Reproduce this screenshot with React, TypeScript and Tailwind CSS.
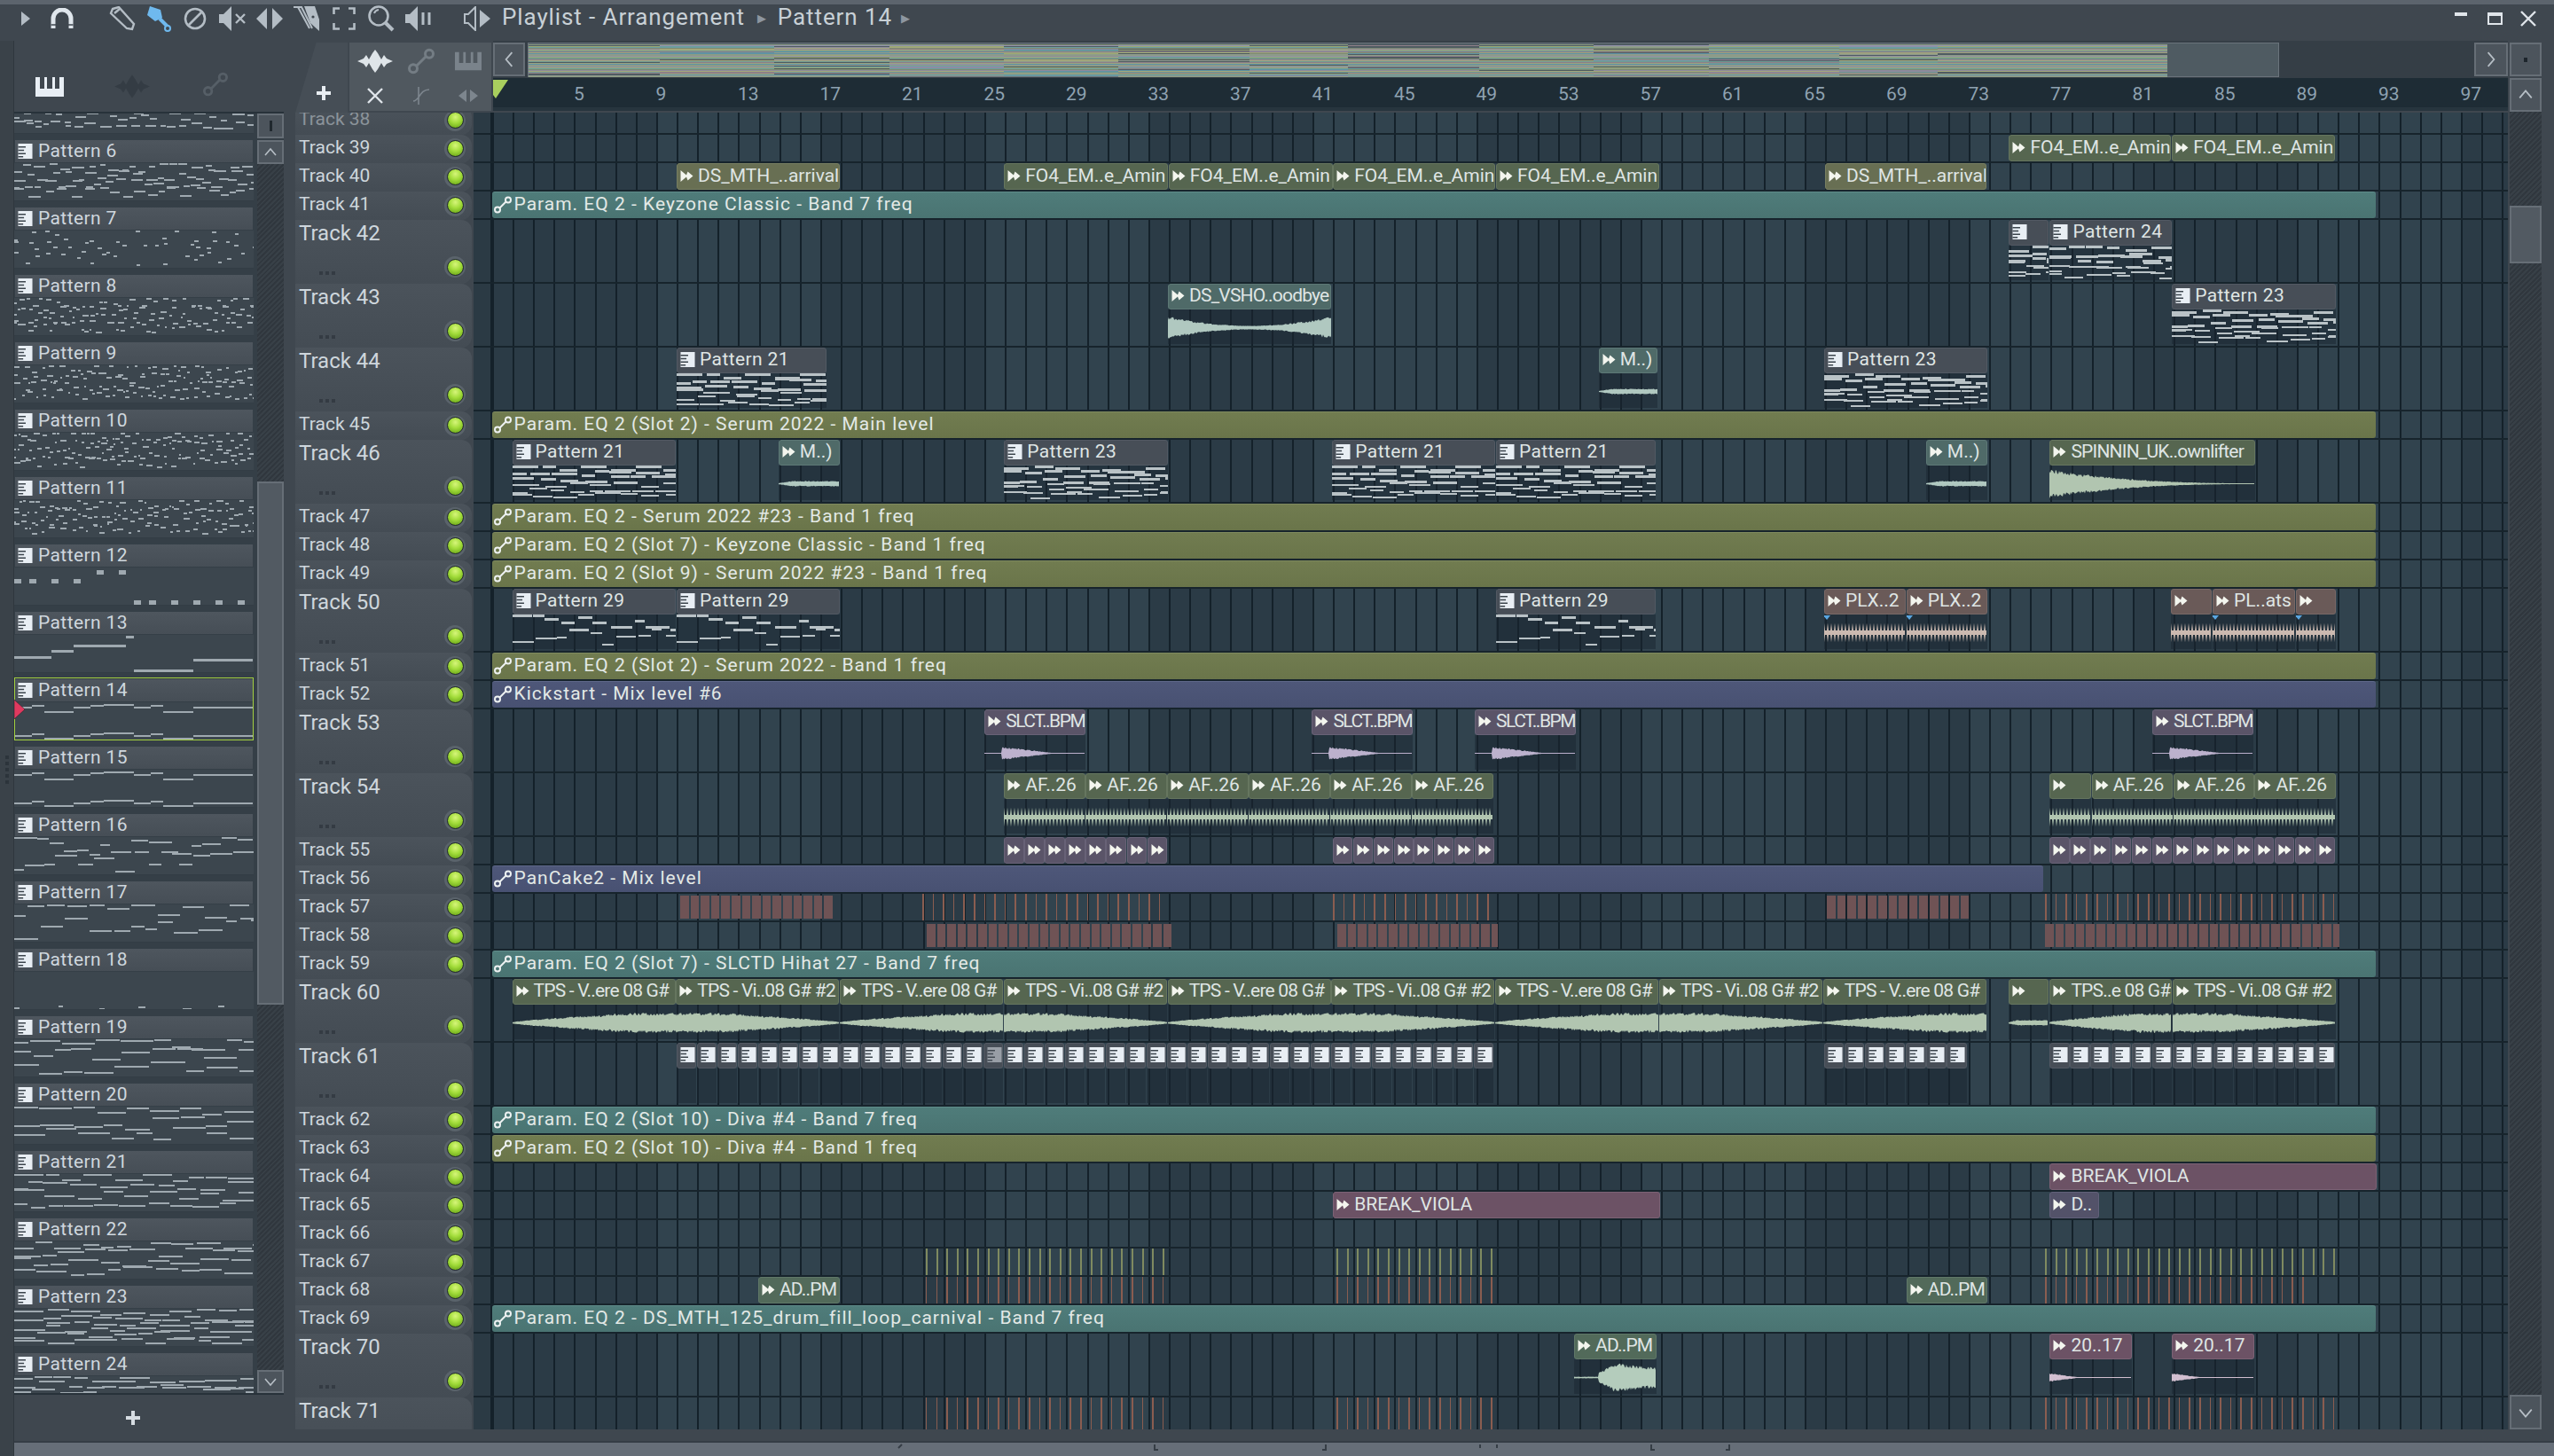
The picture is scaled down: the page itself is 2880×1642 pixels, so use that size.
import type { ReactNode } from "react";

const S = 1.8367;
const GRID_X = 555.5;
const NOTE = "#9fa9b0";

function rng(seed: number) {
  let s = seed * 7919 + 17;
  return () => {
    s = (s * 16807) % 2147483647;
    return (s % 10000) / 10000;
  };
}

type Note = [number, number, number, number?];

const melody14: Note[] = [
  [0, 5, 20], [20, 3, 14], [34, 10, 33], [67, 5, 19], [86, 3, 15], [101, 2, 34],
  [135, 5, 19], [154, 3, 14], [168, 10, 34], [202, 5, 67],
  [0, 37, 20], [20, 35, 14], [34, 40, 33], [67, 37, 19], [86, 35, 15], [101, 34, 34],
  [135, 37, 19], [154, 35, 14], [168, 40, 34], [202, 37, 67],
];

const fixedNotes: Record<number, Note[]> = {
  12: [
    [0, 13, 8, 5], [17, 13, 8, 5], [42, 13, 8, 5], [67, 13, 8, 5], [93, 3, 8, 5], [118, 3, 8, 5],
    [135, 37, 8, 5], [152, 37, 8, 5], [177, 37, 8, 5], [202, 37, 8, 5], [227, 37, 8, 5], [252, 37, 8, 5],
  ],
  13: [[0, 24, 42, 3], [42, 17, 25, 3], [67, 11, 59, 3], [126, 1, 9, 3], [135, 39, 67, 3], [202, 27, 67, 3]],
  14: melody14,
  15: melody14,
};

// walks a few voices over the clip, long = held notes, short = dotted notes
function genNotes(seed: number, w: number, h: number, voices: number, minW: number, maxW: number, gap: number, noteH = 2): Note[] {
  const r = rng(seed);
  const out: Note[] = [];
  for (let v = 0; v < voices; v++) {
    const base = ((v + 0.4) / voices) * (h - 5);
    let x = 0;
    let y = base;
    while (x < w) {
      const len = minW + r() * (maxW - minW);
      y = base + (r() - 0.5) * (h / voices) * 1.1;
      out.push([x, Math.max(0, Math.min(h - 2, Math.round(y))), len, noteH]);
      x += len + gap * r();
    }
  }
  return out;
}

function patternNotes(n: number): Note[] {
  if (fixedNotes[n]) return fixedNotes[n];
  if (n <= 6) return genNotes(n, 270, 43, 4, 6, 14, 6);
  if (n === 7) return genNotes(7, 270, 43, 3, 4, 5, 26);
  if (n <= 11) return genNotes(n, 270, 43, 4, 2, 7, 7, 1.5);
  if (n === 16) return genNotes(16, 270, 43, 2, 10, 26, 1);
  if (n === 17) return genNotes(17, 270, 43, 2, 12, 30, 4);
  if (n === 18) return [[0, 40, 6, 2], [50, 38, 5, 2], [96, 41, 6, 2], [140, 39, 8, 2], [190, 41, 10, 2], [230, 38, 7, 2]];
  if (n <= 20) return genNotes(n, 270, 43, 3, 16, 40, 3);
  if (n <= 22) return genNotes(n, 270, 43, 4, 14, 34, 5);
  return genNotes(n, 270, 43, 6, 14, 36, 6);
}

function Notes({ notes, w, h, light }: { notes: Note[]; w: number; h: number; light?: boolean }) {
  return (
    <svg width={w} height={h} viewBox={`0 0 ${w} ${h}`} className="block" shapeRendering="crispEdges">
      {notes.map((n, i) => (
        <rect key={i} x={n[0]} y={n[1]} width={n[2]} height={n[3] ?? 2} fill={light ? "#b9c2c6" : NOTE} />
      ))}
    </svg>
  );
}

/* ---------- small glyphs ---------- */

function PatIcon({ dim }: { dim?: boolean }) {
  return (
    <svg width="17" height="17" viewBox="0 0 17 18" className={dim ? "shrink-0 opacity-50" : "shrink-0"}>
      <rect width="17" height="18" fill="#e8eef4" />
      <path d="M0 4h9M0 8h7M0 12h9M0 15.5h6" stroke="#3b444c" strokeWidth="1.6" />
    </svg>
  );
}

function AudioIcon({ dim }: { dim?: boolean }) {
  return (
    <svg width="15" height="13" viewBox="0 0 15 13" className={dim ? "shrink-0 opacity-50" : "shrink-0"}>
      <path d="M0.5 0 L7 5.4 L8.5 1.5 L14.5 6.5 L8.5 11.5 L7 7.6 L0.5 13 Z" fill="#f3f5ee" />
    </svg>
  );
}

function AutoIcon({ color = "#eef2f2", size = 20 }: { color?: string; size?: number }) {
  return (
    <svg width={size} height={size} viewBox="0 0 20 20" className="shrink-0" fill="none" stroke={color} strokeWidth="2">
      <circle cx="4" cy="15.5" r="3" />
      <circle cx="16" cy="4.5" r="3" />
      <path d="M6.5 13.5 L13.5 6.5" />
    </svg>
  );
}

function WaveIcon({ color = "#dfe5e9", w = 40, h = 26 }: { color?: string; w?: number; h?: number }) {
  return (
    <svg width={w} height={h} viewBox="0 0 40 26">
      <path
        fill={color}
        d="M0 13 L7 10 L10 6 L13 11 L17 4 L20 0 L23 4 L27 11 L30 6 L33 10 L40 13 L33 16 L30 20 L27 15 L23 22 L20 26 L17 22 L13 15 L10 20 L7 16 Z"
      />
    </svg>
  );
}

function PianoIcon({ color = "#e8eef4", w = 32, h = 22 }: { color?: string; w?: number; h?: number }) {
  return (
    <svg width={w} height={h} viewBox="0 0 32 22">
      <path fill={color} d="M0 0 H5 V13 H10 V0 H13 V13 H19 V0 H22 V13 H27 V0 H32 V22 H0 Z" />
    </svg>
  );
}

function Chevron({ dir, size = 16 }: { dir: "up" | "down" | "left" | "right"; size?: number }) {
  const d = {
    up: "M2 11 L8 4 L14 11",
    down: "M2 5 L8 12 L14 5",
    left: "M11 1 L5 8 L11 15",
    right: "M5 1 L11 8 L5 15",
  }[dir];
  return (
    <svg width={size} height={size} viewBox="0 0 16 16" fill="none" stroke="#b7bfc6" strokeWidth="1.6">
      <path d={d} />
    </svg>
  );
}

function ScrollBtn({ children, className }: { children?: ReactNode; className: string }) {
  return (
    <div className={`flex shrink-0 items-center justify-center border-2 border-[#666e76] bg-[#4c545c] ${className}`}>
      {children}
    </div>
  );
}

/* ---------- toolbar ---------- */

const ic = "#b4bdc5";

function Toolbar() {
  return (
    <div className="flex h-[41px] shrink-0 items-center pb-[9px] text-[#c8d0d6]">
      <svg width="10" height="16" viewBox="0 0 10 16" className="ml-[24px]">
        <path d="M0 0 L10 8 L0 16 Z" fill={ic} />
      </svg>
      <svg width="26" height="24" viewBox="0 0 26 24" fill="none" className="ml-[23px]">
        <path d="M3 23 V12 A10 10 0 0 1 23 12 V23" stroke="#dfe6ec" strokeWidth="5" />
        <path d="M0.5 19 H6 M20 19 H25.5" stroke="#3f474f" strokeWidth="1.5" />
      </svg>
      <svg width="30" height="28" viewBox="0 0 30 28" fill="none" stroke={ic} strokeWidth="2.4" className="ml-[40px]">
        <path d="M4 3 L11 1 L28 20 L26 26 L20 25 L2 8 Z" />
        <path d="M6 8 L12 3" />
      </svg>
      <svg width="30" height="29" viewBox="0 0 30 29" className="ml-[10px]">
        <path d="M6 0 L18 4 L20 13 L12 17 L3 10 Z" fill="#6fb9ee" />
        <path d="M17 14 L27 24" stroke="#6fb9ee" strokeWidth="4" />
        <circle cx="26" cy="25" r="3" fill="#3f474f" stroke="#6fb9ee" strokeWidth="2" />
      </svg>
      <svg width="26" height="26" viewBox="0 0 26 26" fill="none" stroke={ic} strokeWidth="2.6" className="ml-[14px]">
        <circle cx="13" cy="13" r="11" />
        <path d="M6 20 L20 6" />
      </svg>
      <svg width="31" height="28" viewBox="0 0 31 28" className="ml-[14px]">
        <path d="M0 9 H5 L14 0 V28 L5 19 H0 Z" fill={ic} />
        <path d="M19 9 L29 19 M29 9 L19 19" stroke={ic} strokeWidth="2.4" />
      </svg>
      <svg width="30" height="26" viewBox="0 0 30 26" className="ml-[11px]">
        <path d="M0 13 L12 1 V25 Z M30 13 L18 1 V25 Z" fill={ic} />
        <path d="M15 4 V22" stroke="#3f474f" strokeWidth="1" />
      </svg>
      <svg width="30" height="30" viewBox="0 0 30 30" className="ml-[12px]">
        <path d="M0 2 L9 2 L21 26 M5 2 L18 26" stroke={ic} strokeWidth="2" fill="none" />
        <path d="M12 1 H24 L29 16 V29 L19 20 Z" fill={ic} />
        <circle cx="22" cy="13" r="1.6" fill="#3f474f" />
      </svg>
      <svg width="26" height="26" viewBox="0 0 26 26" fill="none" stroke={ic} strokeWidth="2.6" className="ml-[14px]">
        <path d="M1.5 8 V1.5 H8 M18 1.5 H24.5 V8 M24.5 18 V24.5 H18 M8 24.5 H1.5 V18" />
      </svg>
      <svg width="30" height="30" viewBox="0 0 30 30" fill="none" stroke={ic} className="ml-[14px]">
        <circle cx="12" cy="12" r="10.5" strokeWidth="2.6" />
        <path d="M7 9 A6 6 0 0 1 12 5" strokeWidth="2" />
        <path d="M20 20 L28 28" strokeWidth="4" />
      </svg>
      <svg width="30" height="28" viewBox="0 0 30 28" className="ml-[12px]">
        <path d="M0 9 H5 L14 0 V28 L5 19 H0 Z" fill={ic} />
        <path d="M20 7 V21 M27 7 V21" stroke={ic} strokeWidth="3" />
      </svg>
      <svg width="30" height="28" viewBox="0 0 30 28" className="ml-[36px]">
        <path d="M1 9 H5 L13 1 V27 L5 19 H1 Z" fill="none" stroke={ic} strokeWidth="2" />
        <path d="M18 4 L30 14 L18 24 Z" fill={ic} />
      </svg>
      <span className="ml-[13px] pb-[3px] text-[26px] tracking-[0.9px]">Playlist - Arrangement</span>
      <span className="ml-[14px] text-[13px] text-[#8d96a0]">▶</span>
      <span className="ml-[13px] pb-[3px] text-[26px] tracking-[0.9px]">Pattern 14</span>
      <span className="ml-[10px] text-[13px] text-[#8d96a0]">▶</span>
      <div className="ml-auto mr-[20px] flex items-center">
        <div className="mb-[10px] h-[4px] w-[14px] bg-[#e0e5ea]" />
        <div className="ml-[23px] h-[14px] w-[17px] border-2 border-t-4 border-[#e0e5ea]" />
        <svg width="18" height="18" viewBox="0 0 18 18" stroke="#e0e5ea" strokeWidth="2.4" className="ml-[20px]">
          <path d="M1 1 L17 17 M17 1 L1 17" />
        </svg>
      </div>
    </div>
  );
}

/* ---------- picker panel ---------- */

const patternNums = Array.from({ length: 20 }, (_, i) => i + 5);

function PatternItem({ n }: { n: number }) {
  return (
    <div className="relative h-[76px] shrink-0">
      <div className="ml-px flex h-[25px] w-[268px] items-center gap-[6px] bg-gradient-to-b from-[#4e565e] to-[#464e56] pl-[3px] text-[21px] leading-none tracking-[0.4px] text-[#cfd7de]">
        <PatIcon />
        <span>Pattern {n}</span>
      </div>
      <div className="mt-px h-[43px] w-[270px] overflow-hidden border-b border-[#333d45] bg-[#3c464e]">
        <Notes notes={patternNotes(n)} w={270} h={43} />
      </div>
      {n === 14 && (
        <>
          <div className="absolute left-0 top-[-2px] h-[71px] w-[270px] border border-[#a4d040]" />
          <svg width="12" height="22" viewBox="0 0 12 22" className="absolute left-0 top-[23px]">
            <path d="M0 0 L12 11 L0 22 Z" fill="#e0395f" stroke="#22282e" strokeWidth="0.6" />
          </svg>
        </>
      )}
    </div>
  );
}

function PickerPanel() {
  return (
    <div className="flex w-[304px] shrink-0 flex-col">
      <div className="flex h-[80px] shrink-0 items-end pb-[17px]">
        <div className="ml-[24px]">
          <PianoIcon w={32} h={22} />
        </div>
        <div className="ml-[57px] mb-[-2px] opacity-30">
          <WaveIcon w={40} h={27} color="#1d252c" />
        </div>
        <div className="ml-[60px] opacity-40">
          <AutoIcon color="#7a838b" size={28} />
        </div>
      </div>
      <div className="flex h-[1447px] shrink-0 border-t-2 border-b-2 border-[#28323a] bg-[#353f47]">
        <div className="h-full w-[270px] shrink-0 overflow-hidden">
          <div className="mt-[-46px] flex flex-col">
            {patternNums.map((n) => (
              <PatternItem key={n} n={n} />
            ))}
          </div>
        </div>
        <div className="ml-[4px] flex w-[30px] flex-col">
          <ScrollBtn className="h-[28px]">
            <div className="h-[12px] w-[3px] bg-[#20282e]" />
          </ScrollBtn>
          <ScrollBtn className="mt-[2px] h-[27px]">
            <Chevron dir="up" />
          </ScrollBtn>
          <div className="h-[358px] bg-[repeating-linear-gradient(135deg,#30373e_0,#30373e_2px,#384047_2px,#384047_4px)]" />
          <div className="h-[590px] border-2 border-[#666e76] bg-[#525a62]" />
          <div className="flex-1 bg-[repeating-linear-gradient(135deg,#30373e_0,#30373e_2px,#384047_2px,#384047_4px)]" />
          <ScrollBtn className="h-[26px]">
            <Chevron dir="down" />
          </ScrollBtn>
        </div>
      </div>
      <div className="flex flex-1 items-center justify-center pr-[36px] text-[#cfd6dc]">
        <svg width="16" height="16" viewBox="0 0 16 16">
          <path d="M6 0 H10 V6 H16 V10 H10 V16 H6 V10 H0 V6 H6 Z" fill="#d6dce2" />
        </svg>
      </div>
    </div>
  );
}

/* ---------- playlist data ---------- */

type ColorKey = "green" | "olive" | "mauve" | "brown" | "teal" | "plum" | "slate" | "sage" | "pat";
type WaveKind = "rise" | "fall" | "slct" | "comb" | "vsho" | "m" | "spin" | "ad" | "burst";

type Clip = {
  a: number;
  b: number;
  t?: string;
  kind: "audio" | "pat";
  color: ColorKey;
  wave?: WaveKind;
  seed?: number;
  dim?: boolean;
  marks?: boolean;
  notes?: "dense" | "lines" | "low";
};

const clipBg: Record<ColorKey, string> = {
  green: "bg-[#566650] border-[#66765f]",
  olive: "bg-[#686f53] border-[#787f62]",
  mauve: "bg-[#5a5468] border-[#686277]",
  brown: "bg-[#6a5a58] border-[#786866]",
  teal: "bg-[#4f6a68] border-[#5d7876]",
  plum: "bg-[#6c5265] border-[#7c6275]",
  slate: "bg-[#535269] border-[#616079]",
  sage: "bg-[#526a5a] border-[#607868]",
  pat: "bg-[#474e57] border-[#525963]",
};

const waveFill: Record<ColorKey, string> = {
  green: "#b1c5b0",
  olive: "#b5c0a5",
  mauve: "#bcb1cd",
  brown: "#cbb9b0",
  teal: "#b0c8c0",
  plum: "#d2bfd0",
  slate: "#bcb1cd",
  sage: "#b4ccbc",
  pat: NOTE,
};

const au = (a: number, b: number, t: string | undefined, color: ColorKey, wave?: WaveKind, extra?: Partial<Clip>): Clip => ({
  a, b, t, color, wave, kind: "audio", ...extra,
});
const pa = (a: number, b: number, t: string | undefined, seed: number, notes: Clip["notes"] = "dense"): Clip => ({
  a, b, t, color: "pat", kind: "pat", seed, notes,
});

function series(start: number, count: number, step: number, make: (a: number, b: number, i: number) => Clip) {
  return Array.from({ length: count }, (_, i) => make(start + i * step, start + (i + 1) * step - 0.4, i));
}

type Auto = { t: string; color: "tealA" | "oliveA" | "indigoA"; b: number };

const autos: Record<number, Auto> = {
  41: { t: "Param. EQ 2 - Keyzone Classic - Band 7 freq", color: "tealA", b: 1459.5 },
  45: { t: "Param. EQ 2 (Slot 2) - Serum 2022 - Main level", color: "oliveA", b: 1459.5 },
  47: { t: "Param. EQ 2 - Serum 2022 #23 - Band 1 freq", color: "oliveA", b: 1459.5 },
  48: { t: "Param. EQ 2 (Slot 7) - Keyzone Classic - Band 1 freq", color: "oliveA", b: 1459.5 },
  49: { t: "Param. EQ 2 (Slot 9) - Serum 2022 #23 - Band 1 freq", color: "oliveA", b: 1459.5 },
  51: { t: "Param. EQ 2 (Slot 2) - Serum 2022 - Band 1 freq", color: "oliveA", b: 1459.5 },
  52: { t: "Kickstart - Mix level #6", color: "indigoA", b: 1459.5 },
  56: { t: "PanCake2 - Mix level", color: "indigoA", b: 1255 },
  59: { t: "Param. EQ 2 (Slot 7) - SLCTD Hihat 27 - Band 7 freq", color: "tealA", b: 1459.5 },
  62: { t: "Param. EQ 2 (Slot 10) - Diva #4 - Band 7 freq", color: "tealA", b: 1459.5 },
  63: { t: "Param. EQ 2 (Slot 10) - Diva #4 - Band 1 freq", color: "oliveA", b: 1459.5 },
  69: { t: "Param. EQ 2 - DS_MTH_125_drum_fill_loop_carnival - Band 7 freq", color: "tealA", b: 1459.5 },
};

const autoBg = {
  tealA: "bg-gradient-to-b from-[#4f7c7a] to-[#4a7472] border-[#5f8c8a]",
  oliveA: "bg-gradient-to-b from-[#717c50] to-[#6a754a] border-[#7f8a5e]",
  indigoA: "bg-gradient-to-b from-[#4e5779] to-[#485172] border-[#5e6789]",
};

const FO4 = "FO4_EM..e_Amin";
const DS = "DS_MTH_..arrival";
const TA = "TPS - V..ere 08 G#";
const TB = "TPS - Vi..08 G# #2";

// labels whose capitals run wider in this font than in the original
const tightLabels = new Set(["DS_VSHO..oodbye", "AD..PM", "SPINNIN_UK..ownlifter", TA, TB, "TPS..e 08 G#"]);

const clips: Record<number, Clip[]> = {
  39: [au(1234, 1333.6, FO4, "green"), au(1334, 1434, FO4, "green")],
  40: [
    au(416, 516, DS, "olive"), au(617, 717.6, FO4, "green"), au(718, 818.6, FO4, "green"),
    au(819, 918.6, FO4, "green"), au(919, 1019, FO4, "green"), au(1121, 1220, DS, "olive"),
  ],
  42: [pa(1233.5, 1258, undefined, 31), pa(1259, 1334, "Pattern 24", 24)],
  43: [au(717.6, 818, "DS_VSHO..oodbye", "teal", "vsho"), pa(1334, 1434.5, "Pattern 23", 23)],
  44: [pa(416, 508, "Pattern 21", 21), au(982, 1018, "M..)", "teal", "m"), pa(1120.5, 1220.5, "Pattern 23", 23)],
  46: [
    pa(315, 415.5, "Pattern 21", 21), au(478.5, 516, "M..)", "teal", "m"), pa(617, 717.5, "Pattern 23", 23),
    pa(818.5, 918.5, "Pattern 21", 21), pa(919, 1017, "Pattern 21", 21), au(1183, 1220.5, "M..)", "teal", "m"),
    au(1259, 1385, "SPINNIN_UK..ownlifter", "green", "spin"),
  ],
  50: [
    pa(315, 415.5, "Pattern 29", 29, "low"), pa(416, 516, "Pattern 29", 29, "low"), pa(919, 1017, "Pattern 29", 29, "low"),
    au(1120.5, 1170.5, "PLX..2", "brown", "comb", { marks: true }), au(1171, 1220.5, "PLX..2", "brown", "comb", { marks: true }),
    au(1333.5, 1358.5, undefined, "brown", "comb"), au(1359, 1409.5, "PL..ats", "brown", "comb", { marks: true }),
    au(1410, 1434.5, undefined, "brown", "comb", { marks: true }),
  ],
  53: [au(605, 667, "SLCT..BPM", "mauve", "slct"), au(806, 868, "SLCT..BPM", "mauve", "slct"), au(906, 968, "SLCT..BPM", "mauve", "slct"), au(1322, 1384, "SLCT..BPM", "mauve", "slct")],
  54: [
    ...series(617, 6, 50.1, (a, b) => au(a, b, "AF..26", "green", "comb")),
    au(1259, 1284.5, undefined, "green", "comb"),
    ...series(1284.8, 3, 50, (a, b) => au(a, b, "AF..26", "green", "comb")),
  ],
  55: [
    ...series(617, 8, 12.55, (a, b) => au(a, b, undefined, "mauve")),
    ...series(819, 8, 12.4, (a, b) => au(a, b, undefined, "mauve")),
    ...series(1259, 14, 12.54, (a, b) => au(a, b, undefined, "mauve")),
  ],
  60: [
    ...series(315, 9, 100.6, (a, b, i) => au(a, b, i % 2 === 0 ? TA : TB, "green", i % 2 === 0 ? "rise" : "fall")),
    au(1234, 1258, undefined, "green", "m"),
    au(1259, 1334, "TPS..e 08 G#", "green", "rise"),
    au(1334.4, 1434.5, TB, "green", "fall"),
  ],
  61: [
    ...Array.from({ length: 40 }, (_, i) => ({ ...pa(416 + i * 12.55, 416 + (i + 1) * 12.55 - 0.5, undefined, 0, undefined), dim: i === 15 })),
    ...series(1120.5, 7, 12.55, (a, b) => pa(a, b, undefined, 0, undefined)),
    ...series(1259, 14, 12.54, (a, b) => pa(a, b, undefined, 0, undefined)),
  ],
  64: [au(1259, 1459.5, "BREAK_VIOLA", "plum")],
  65: [au(819, 1019.5, "BREAK_VIOLA", "plum"), au(1259, 1289.5, "D..", "slate")],
  68: [au(466, 516, "AD..PM", "sage"), au(1171, 1220.5, "AD..PM", "sage")],
  70: [au(967, 1017.5, "AD..PM", "sage", "ad"), au(1259, 1309.5, "20..17", "plum", "burst"), au(1334, 1384.5, "20..17", "plum", "burst")],
};

type Stripe = { a: number; b: number; c: "blocks" | "redThin" | "oliveThin" };

const stripes: Record<number, Stripe[]> = {
  57: [
    { a: 418, b: 512, c: "blocks" }, { a: 567, b: 718, c: "redThin" }, { a: 819, b: 919, c: "redThin" },
    { a: 1122, b: 1210, c: "blocks" }, { a: 1256, b: 1434, c: "redThin" },
  ],
  58: [{ a: 569.5, b: 720, c: "blocks" }, { a: 821.5, b: 920, c: "blocks" }, { a: 1256, b: 1437, c: "blocks" }],
  67: [{ a: 569, b: 717, c: "oliveThin" }, { a: 821, b: 918, c: "oliveThin" }, { a: 1256, b: 1434, c: "oliveThin" }],
  68: [{ a: 569, b: 717, c: "redThin" }, { a: 821, b: 918, c: "redThin" }, { a: 1256, b: 1420, c: "redThin" }],
  71: [{ a: 569, b: 717, c: "redThin" }, { a: 821, b: 918, c: "redThin" }, { a: 1256, b: 1434, c: "redThin" }],
};

const stripeBg = {
  blocks: "my-[2px] bg-[repeating-linear-gradient(90deg,#6f5355_0,#6f5355_9.6px,transparent_9.6px,transparent_11.6px)]",
  redThin: "bg-[repeating-linear-gradient(90deg,#8a5d50_0,#8a5d50_1.5px,transparent_1.5px,transparent_11.6px)]",
  oliveThin: "bg-[repeating-linear-gradient(90deg,#7f8a60_0,#7f8a60_2px,transparent_2px,transparent_11.6px)]",
};

const tallTracks = new Set([42, 43, 44, 46, 50, 53, 54, 60, 61, 70, 71]);
const trackNums = Array.from({ length: 34 }, (_, i) => i + 38);

/* ---------- waveforms ---------- */

function waveEnv(kind: WaveKind, p: number, x: number) {
  switch (kind) {
    case "rise":
      return 0.02 + 0.23 * Math.min(1, p * 1.4) ** 0.8;
    case "fall":
      return 0.02 + 0.23 * Math.min(1, (1 - p) * 1.4) ** 0.8;
    case "slct":
      return p < 0.17 ? 0.012 : 0.012 + 0.16 * Math.max(0, 1 - (p - 0.17) / 0.5);
    case "comb":
      return x % 4 === 0 ? 0.26 : 0.06;
    case "vsho":
      return 0.05 + 0.24 * Math.abs(2 * p - 1) ** 2;
    case "m":
      return Math.min(0.015 + p * 0.25, 0.07);
    case "spin":
      return 0.012 + 0.36 * (1 - p) ** 2.4;
    case "ad":
      return p < 0.3 ? 0.02 : p < 0.5 ? 0.12 + (p - 0.3) * 1.2 : 0.36 - (p - 0.5) * 0.2;
    case "burst":
      return 0.012 + 0.1 * Math.max(0, 1 - p * 3);
  }
}

function Wave({ kind, w, h, fill }: { kind: WaveKind; w: number; h: number; fill: string }) {
  const r = rng(Math.round(w) + kind.length);
  const top: string[] = [];
  const bottom: string[] = [];
  const noisy = kind !== "comb";
  for (let x = 0; x <= w; x += 1) {
    const e = waveEnv(kind, x / w, x) * h;
    const top1 = e * (noisy ? 0.78 + r() * 0.34 : 1);
    const bot1 = e * (noisy ? 0.78 + r() * 0.34 : 1);
    top.push(`${x},${(h / 2 - top1).toFixed(1)}`);
    bottom.unshift(`${x},${(h / 2 + bot1).toFixed(1)}`);
  }
  return (
    <svg width={w} height={h} viewBox={`0 0 ${w} ${h}`} className="block">
      <polygon points={[...top, ...bottom].join(" ")} fill={fill} />
    </svg>
  );
}

/* ---------- clips ---------- */

function ClipBox({ clip, tall }: { clip: Clip; tall: boolean }) {
  const left = clip.a * S - GRID_X;
  const width = (clip.b - clip.a) * S;
  const prevH = 41;
  let preview: ReactNode = null;
  if (tall && clip.wave) {
    preview = <Wave kind={clip.wave} w={width} h={prevH} fill={waveFill[clip.color]} />;
  } else if (tall && clip.kind === "pat" && clip.notes === "dense" && clip.seed) {
    preview = <Notes notes={genNotes(clip.seed, width, prevH, 6, 14, 30, 8, 2.5)} w={width} h={prevH} light />;
  } else if (tall && clip.kind === "pat" && clip.notes === "low" && clip.seed) {
    preview = <Notes notes={genNotes(clip.seed, width, prevH, 2, 10, 28, 6, 2.5)} w={width} h={prevH} light />;
  }
  const spacing =
    clip.t === "SLCT..BPM"
      ? "tracking-[-1.5px]"
      : clip.t && tightLabels.has(clip.t)
        ? "tracking-[-0.8px]"
        : clip.kind === "pat"
          ? "tracking-[0.4px]"
          : "tracking-normal";
  return (
    <div className="absolute bottom-0 top-0 flex flex-col" style={{ left, width }}>
      <div
        className={`flex shrink-0 items-center gap-[5px] overflow-hidden rounded-[3px] border pb-[2px] pl-[3px] text-[21px] leading-none text-[#dfe5e4] ${spacing} ${
          tall ? "h-[29px]" : "h-[30px]"
        } ${clipBg[clip.color]}`}
      >
        {clip.kind === "pat" ? <PatIcon dim={clip.dim} /> : <AudioIcon dim={clip.dim} />}
        {clip.t && <span className="whitespace-nowrap">{clip.t}</span>}
      </div>
      {tall && (
        <div className="relative mb-[2px] flex-1 overflow-hidden bg-[#1a2630]/50">
          {preview}
          {clip.marks && (
            <svg width="8" height="5" viewBox="0 0 8 5" className="absolute left-[-1px] top-[1px]">
              <path d="M0 0 H8 L4 5 Z" fill="#5aa6e0" />
            </svg>
          )}
        </div>
      )}
    </div>
  );
}

function Led() {
  return (
    <div className="flex h-[24px] w-[24px] shrink-0 items-center justify-center rounded-full bg-[#5a636b]">
      <div className="h-[19px] w-[19px] rounded-full border border-[#20282c] bg-[radial-gradient(circle_at_50%_30%,#d6f57a_0,#a2dc3a_45%,#5e9a12_100%)]" />
    </div>
  );
}

function TrackRow({ n }: { n: number }) {
  const tall = tallTracks.has(n);
  const auto = autos[n];
  return (
    <div className={`flex shrink-0 ${tall ? "h-[72px]" : "h-[32px]"}`}>
      <div className="flex w-[199px] shrink-0 flex-col rounded-r-[12px] bg-gradient-to-b from-[#4b535b] to-[#444c54] pl-[4px] pr-[7px]">
        <div className={`flex h-[31px] items-center justify-between leading-none ${tall ? "text-[24px]" : "text-[21px]"} text-[#ced6dc]`}>
          <span className={n === 38 ? "pb-[2px] opacity-50" : "pb-[2px]"}>Track {n}</span>
          {!tall && <Led />}
        </div>
        {tall && (
          <div className="flex justify-between">
            <div className="ml-[23px] mt-[27px] flex gap-[3px]">
              <div className="h-[4px] w-[4px] bg-[#343b43]" />
              <div className="h-[4px] w-[4px] bg-[#343b43]" />
              <div className="h-[4px] w-[4px] bg-[#343b43]" />
            </div>
            <div className="mt-[10px]">
              <Led />
            </div>
          </div>
        )}
      </div>
      <div className="ml-[2px] flex flex-1 border-b-2 border-[#17242c]">
        <div className="w-[20.5px] shrink-0 border-r-2 border-[#14212a] bg-[#2b3a44]" />
        <div className="relative flex-1 bg-[repeating-linear-gradient(90deg,#14212a_0,#14212a_2px,transparent_2px,transparent_23.125px),repeating-linear-gradient(90deg,#2b3b46_0,#2b3b46_185px,#31434e_185px,#31434e_370px)]">
          {auto && (
            <div
              className={`absolute bottom-0 left-0 top-0 flex items-center gap-[3px] rounded-[3px] border-t pb-[2px] pl-[2px] text-[21px] leading-none tracking-[1px] text-[#e3e9e6] ${autoBg[auto.color]}`}
              style={{ width: (auto.b - 302.7) * S }}
            >
              <AutoIcon />
              <span className="whitespace-nowrap">{auto.t}</span>
            </div>
          )}
          {(stripes[n] ?? []).map((s, i) => (
            <div
              key={i}
              className={`absolute bottom-0 top-0 ${stripeBg[s.c]}`}
              style={{ left: s.a * S - GRID_X, width: (s.b - s.a) * S }}
            />
          ))}
          {(clips[n] ?? []).map((c, i) => (
            <ClipBox key={i} clip={c} tall={tall} />
          ))}
        </div>
      </div>
    </div>
  );
}

/* ---------- overview + ruler ---------- */

const palette = ["#8b9c85", "#8f8fa8", "#9aa873", "#6c9da0", "#7d8b70", "#8d8a9d", "#a3a77a", "#709a94", "#8e7f88", "#9ba37f", "#5f93a3", "#8f9a8c"];

function Overview() {
  const r = rng(5);
  const breaks = [0, 0.08, 0.15, 0.22, 0.29, 0.36, 0.44, 0.5, 0.58, 0.65, 0.72, 0.8, 0.86, 1];
  const w = 1848;
  return (
    <svg width={w} height="37" viewBox={`0 0 ${w} 37`} shapeRendering="crispEdges" className="block">
      {Array.from({ length: 37 }, (_, y) =>
        breaks.slice(0, -1).map((b, i) => {
          const on = r() > 0.1;
          if (!on) return null;
          const col = palette[(y + (r() > 0.8 ? i : 0)) % palette.length];
          return <rect key={`${y}-${i}`} x={b * w} y={y} width={(breaks[i + 1] - b) * w} height="1" fill={col} />;
        }),
      )}
    </svg>
  );
}

const rulerBars = Array.from({ length: 24 }, (_, i) => 5 + i * 4);

function Ruler() {
  return (
    <div className="relative flex h-[37px] items-center overflow-hidden border-b-4 border-[#27353e] bg-[#1e2c35] pt-[4px] text-[21px] leading-none text-[#8fa2b1]">
      <svg width="17" height="22" viewBox="0 0 17 22" className="absolute left-0 top-[2px]">
        <path d="M0 0 H17 L3 21 L0 17 Z" fill="#a9cf5e" />
      </svg>
      <div className="flex pl-[91px]">
        {rulerBars.map((b) => (
          <div key={b} className="w-[92.5px] shrink-0">
            {b}
          </div>
        ))}
      </div>
    </div>
  );
}

function Playlist() {
  return (
    <div className="flex h-[1566px] w-[2533px] shrink-0">
      <div className="flex w-[2495px] flex-col">
        <div className="flex h-[81px] shrink-0">
          <div className="flex w-[223px] shrink-0 pt-[2px]">
            <div className="flex w-[59px] items-end justify-center bg-[#464e56] pb-[14px] pl-[5px] [clip-path:polygon(40%_0,100%_0,100%_100%,0_100%)]">
              <svg width="16" height="16" viewBox="0 0 16 16">
                <path d="M6 0 H10 V6 H16 V10 H10 V16 H6 V10 H0 V6 H6 Z" fill="#e8edf2" />
              </svg>
            </div>
            <div className="ml-[2px] grid h-[77px] w-[160px] grid-cols-3 items-center justify-items-center bg-[#50585f] pl-[3px]">
              <WaveIcon w={40} h={26} />
              <div className="opacity-60">
                <AutoIcon color="#8d969e" size={30} />
              </div>
              <div className="opacity-70">
                <PianoIcon color="#8d969e" w={30} h={22} />
              </div>
              <svg width="18" height="18" viewBox="0 0 18 18" stroke="#e0e5ea" strokeWidth="2.4">
                <path d="M1 1 L17 17 M17 1 L1 17" />
              </svg>
              <svg width="20" height="22" viewBox="0 0 20 22" fill="none" stroke="#7d868e" strokeWidth="1.6">
                <path d="M1 17 C8 17 8 4 19 4 M7 1 V21" />
              </svg>
              <svg width="22" height="14" viewBox="0 0 22 14">
                <path d="M0 7 L9 0 V14 Z M22 7 L13 0 V14 Z" fill="#7d868e" />
              </svg>
            </div>
          </div>
          <div className="flex min-w-0 flex-1 flex-col">
            <div className="flex h-[42px] shrink-0 bg-[#353e46] pt-[2px]">
              <ScrollBtn className="h-[38px] w-[36px]">
                <Chevron dir="left" size={18} />
              </ScrollBtn>
              <div className="ml-[3px] h-[39px] w-[1975px] border border-[#6a737b] bg-[#4f5b62] pt-px">
                <Overview />
              </div>
              <ScrollBtn className="ml-auto h-[38px] w-[38px]">
                <Chevron dir="right" size={18} />
              </ScrollBtn>
            </div>
            <Ruler />
          </div>
        </div>
        <div className="h-[1485px] overflow-hidden">
          <div className="mt-[-7px] flex flex-col">
            {trackNums.map((n) => (
              <TrackRow key={n} n={n} />
            ))}
          </div>
        </div>
      </div>
      <div className="ml-[2px] flex w-[36px] flex-col pt-[2px]">
        <ScrollBtn className="h-[38px]">
          <div className="h-[5px] w-[4px] bg-[#1d252c]" />
        </ScrollBtn>
        <ScrollBtn className="mt-[2px] h-[38px]">
          <Chevron dir="up" size={18} />
        </ScrollBtn>
        <div className="h-[106px] bg-[repeating-linear-gradient(135deg,#30373e_0,#30373e_2px,#384047_2px,#384047_4px)]" />
        <div className="h-[65px] border-2 border-[#666e76] bg-[#525a62]" />
        <div className="flex-1 bg-[repeating-linear-gradient(135deg,#30373e_0,#30373e_2px,#384047_2px,#384047_4px)]" />
        <ScrollBtn className="h-[39px]">
          <Chevron dir="down" size={18} />
        </ScrollBtn>
      </div>
    </div>
  );
}

export default function App() {
  return (
    <div className="relative flex h-[1642px] w-[2880px] flex-col overflow-hidden bg-[#3f474f] [font-family:Roboto,'Liberation_Sans',sans-serif]">
      <div className="h-[5px] shrink-0 bg-[#5c646d]" />
      <Toolbar />
      <div className="flex min-h-0 flex-1">
        <div className="flex w-[16px] shrink-0 flex-col items-center justify-center gap-[3px] border-r border-[#2f373e] bg-[#3a4249] pt-[48px]">
          <div className="h-[4px] w-[4px] bg-[#2c343b]" />
          <div className="h-[4px] w-[4px] bg-[#2c343b]" />
          <div className="h-[4px] w-[4px] bg-[#2c343b]" />
          <div className="h-[4px] w-[4px] bg-[#2c343b]" />
          <div className="h-[4px] w-[4px] bg-[#2c343b]" />
        </div>
        <div className="flex min-w-0 flex-1 flex-col">
          <div className="flex h-[1579px] shrink-0">
            <PickerPanel />
            <div className="ml-[13px]">
              <Playlist />
            </div>
          </div>
          <div className="relative flex-1 border-t-2 border-[#353d45] bg-[#666e78]">
            <svg width="2864" height="14" viewBox="0 0 2864 14" className="block" fill="none" stroke="#353d45" strokeWidth="2">
              <path d="M1001 2 L997 6 M1286 2 V8 H1290 M1479 2 V8 H1475 M1653 2 V6 M1672 2 V6 M1846 2 V8 H1850 M1934 2 V8 H1930" />
            </svg>
          </div>
        </div>
      </div>
    </div>
  );
}
